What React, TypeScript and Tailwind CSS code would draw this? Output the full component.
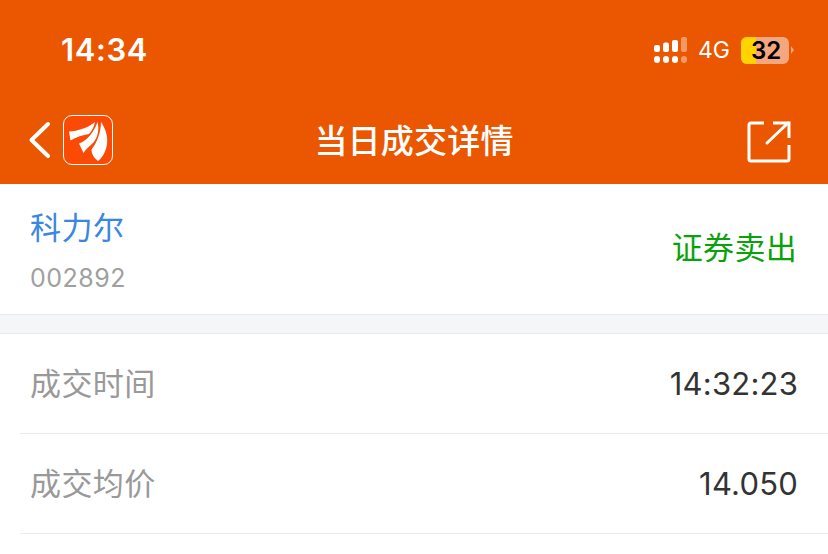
import React from 'react'

const Signal = () => (
    <svg width="36" height="26" viewBox="0 0 36 26">
        <g fill="#fff">
            <rect x="1" y="8" width="6" height="7" rx="2" />
            <rect x="10" y="5.5" width="6" height="9.5" rx="2" />
            <rect x="19" y="3" width="6" height="12" rx="2" />
            <rect x="1" y="19" width="6" height="7" rx="3" />
            <rect x="10" y="19" width="6" height="7" rx="3" />
            <rect x="19" y="19" width="6" height="7" rx="3" />
        </g>
        <g fill="#fff" fillOpacity="0.4">
            <rect x="28" y="0" width="6" height="15" rx="2" />
            <rect x="28" y="19" width="6" height="7" rx="3" />
        </g>
    </svg>
)

const Logo = () => (
    <div className="w-[50px] h-[50px] rounded-[9px] border border-white bg-[#fa4a05]">
        <svg width="48" height="48" viewBox="0 0 48 48">
            <path fill="#fff" d="M5 15.500 C14 15 24 12 31 6 C30 11 28 15 25 18 C19 19 12 21 6.500 24.500 Z" />
            <path fill="#fff" d="M15 27.500 C23 25 30 16 33.500 6 C35.500 13 34 21 29.500 26.500 C26 30 22 32.500 19.500 37 Z" />
            <path fill="#fff" d="M34 45 C30 42 27.500 38 27.500 33.500 C33 27 37 16 37 6 C42.500 14 44.500 23 42.500 31 C41 37 38 42 34 45 Z" />
        </svg>
    </div>
)

const Row = ({ label, value }: { label: string; value: string }) => (
    <div className="h-[100px] ml-5 pl-[10px] pr-[30px] border-b border-[#ececec] flex items-center justify-between">
        <span className="text-[31px] mt-[1px] tracking-[0.4px] text-[#999]">{label}</span>
        <span className="text-[31px] mt-[1px] tracking-[0.2px] text-[#333]">{value}</span>
    </div>
)

export default function App() {
    return (
        <div className="w-[828px] h-[554px] overflow-hidden bg-white font-['Inter','Noto_Sans_CJK_SC',sans-serif]">
            <div className="h-[184px] bg-[#eb5600] flex flex-col">
                <div className="h-[100px] pl-[61px] pr-[34px] flex items-center justify-between">
                    <span className="text-[31px] font-semibold text-white tracking-[0.6px]">14:34</span>
                    <div className="flex items-center">
                        <Signal />
                        <span className="ml-[9px] text-[23px] text-white">4G</span>
                        <div className="ml-[11px] w-[48px] h-[27px] rounded-[6px] bg-[#f4a67e] overflow-hidden flex">
                            <div className="w-[15px] h-full bg-[#ffd400]" />
                            <span className="-ml-[5px] text-[24px] leading-[27px] font-semibold text-black">32</span>
                        </div>
                        <div className="ml-[2px] w-0 h-0 border-y-[4px] border-y-transparent border-l-[3px] border-l-[#f4a67e]" />
                    </div>
                </div>
                <div className="flex-1 pl-7 pr-[37px] flex items-center justify-between relative">
                    <div className="flex items-center gap-[12px] -mt-[4px]">
                        <svg width="23" height="38" viewBox="0 0 23 38">
                            <path d="M20 3 L3.500 19 L20 35" fill="none" stroke="#fff" strokeWidth="4" strokeLinecap="round" strokeLinejoin="round" />
                        </svg>
                        <Logo />
                    </div>
                    <span className="absolute left-0 right-0 text-center text-[33px] tracking-[0.2px] font-medium text-white">当日成交详情</span>
                    <svg width="44" height="44" viewBox="0 0 44 44">
                        <path d="M17 3 H4 Q2 3 2 5 V39 Q2 41 4 41 H40 Q42 41 42 39 V25" fill="none" stroke="#fff" strokeWidth="3" />
                        <path d="M26 3 H42 V18" fill="none" stroke="#fff" strokeWidth="3" />
                        <path d="M20 23 L41 3" fill="none" stroke="#fff" strokeWidth="3" strokeLinecap="round" />
                    </svg>
                </div>
            </div>
            <div className="h-[131px] pl-[30px] pr-[31px] flex items-center justify-between border-b border-[#e9e9e9]">
                <div className="flex flex-col gap-[10px] mt-[4px]">
                    <span className="text-[31px] leading-[44px] text-[#3b86e0] tracking-[0.5px]">科力尔</span>
                    <span className="text-[25px] leading-[36px] text-[#a0a0a0] tracking-[0.5px]">002892</span>
                </div>
                <span className="text-[31px] -mt-[2px] tracking-[0.3px] text-[#0aa20a]">证券卖出</span>
            </div>
            <div className="h-[19px] bg-[#f5f6f8] border-b border-[#e9e9e9]" />
            <Row label="成交时间" value="14:32:23" />
            <Row label="成交均价" value="14.050" />
        </div>
    )
}
